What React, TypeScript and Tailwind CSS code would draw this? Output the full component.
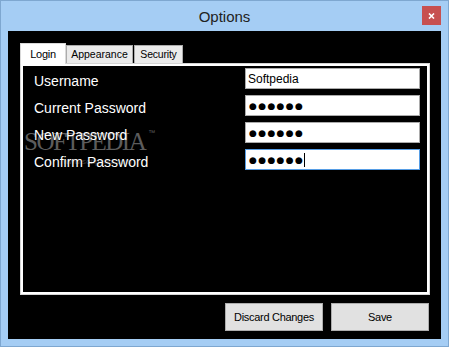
import React from "react";

const sans = { fontFamily: '"Liberation Sans", Arial, sans-serif' };

function Dots() {
  return (
    <span
      className="text-black leading-none pt-[1px] pl-[1px]"
      style={{ fontFamily: '"DejaVu Sans", sans-serif', fontSize: "9px", letterSpacing: "1.35px" }}
    >
      ●●●●●●
    </span>
  );
}

function Row({
  label,
  children,
  focused,
}: {
  label: string;
  children: React.ReactNode;
  focused?: boolean;
}) {
  return (
    <div className="flex items-center h-[21px] mb-[6px]">
      <div className="flex-1 text-white text-[14px] leading-none pt-[5px]">{label}</div>
      <div
        className={
          "w-[175px] h-[21px] bg-white border flex items-center pl-[2px] " +
          (focused ? "border-[#569de5]" : "border-[#ababab]")
        }
      >
        {children}
      </div>
    </div>
  );
}

export default function App() {
  return (
    <div
      className="w-[449px] h-[347px] bg-[#a5cdf4] border border-[#7ea7d0] flex flex-col overflow-hidden"
      style={sans}
    >
      <div className="relative h-[30px] flex items-center justify-center">
        <span className="text-[15px] text-[#222] leading-none pt-[1px]">Options</span>
        <div className="absolute right-[7px] top-[5px] w-[19px] h-[19px] bg-[#c75050] flex items-center justify-center">
          <svg width="7" height="6" viewBox="0 0 7 6">
            <path d="M1 0.5 L6 5.5 M6 0.5 L1 5.5" stroke="white" strokeWidth="1.6" />
          </svg>
        </div>
      </div>
      <div className="mx-[7px] h-[308px] bg-black flex flex-col pt-[12px] pb-[8px]">
        <div className="pl-[12px] pr-[11px] flex flex-col">
          <div className="h-[20px] flex items-end text-black">
            <div className="relative z-10 w-[46px] h-[21px] -mb-[1px] bg-white border border-b-0 border-[#d9d9d9] flex items-center justify-center">
              <span className="text-[11px] leading-none tracking-[-0.3px]">Login</span>
            </div>
            <div className="w-[67px] h-[18px] bg-[#ebebeb] border border-[#acacac] border-b-0 flex items-center justify-center">
              <span className="text-[10.5px] leading-none">Appearance</span>
            </div>
            <div className="w-[49px] h-[18px] ml-[1px] bg-[#ebebeb] border border-[#acacac] border-b-0 flex items-center justify-center">
              <span className="text-[10.5px] leading-none tracking-[-0.2px]">Security</span>
            </div>
          </div>
          <div className="h-[232px] border border-[#d5d5d5] bg-white p-[2px] flex">
            <div className="relative flex-1 bg-black pl-[11px] pr-[7px] pt-[2px] overflow-hidden">
              <div className="absolute left-[1px] top-[63px] flex items-start pointer-events-none">
                <span
                  className="text-[25px] leading-none text-[#5c5c5c] tracking-[-1.5px]"
                  style={{ fontFamily: '"Liberation Serif", "Times New Roman", serif' }}
                >
                  SOFTPEDIA
                </span>
                <span className="text-[7px] text-[#5c5c5c] ml-[3px] leading-none">™</span>
              </div>
              <div className="absolute left-[40px] top-[92px] text-[8px] text-[#3c3c3c] leading-none">
                www.softpedia.com
              </div>
              <div className="relative">
                <Row label="Username">
                  <span className="text-[12px] text-black leading-none pt-[1px]">Softpedia</span>
                </Row>
                <Row label="Current Password">
                  <Dots />
                </Row>
                <Row label="New Password">
                  <Dots />
                </Row>
                <Row label="Confirm Password" focused>
                  <Dots />
                  <span className="w-[1px] h-[14px] bg-black" />
                </Row>
              </div>
            </div>
          </div>
        </div>
        <div className="flex justify-end gap-[8px] pr-[12px] mt-[8px]">
          <button className="w-[98px] h-[28px] bg-[#e1e1e1] border border-[#adadad] text-[11px] tracking-[-0.3px] text-black">
            Discard Changes
          </button>
          <button className="w-[98px] h-[28px] bg-[#e1e1e1] border border-[#adadad] text-[11px] tracking-[-0.3px] text-black">
            Save
          </button>
        </div>
      </div>
    </div>
  );
}
